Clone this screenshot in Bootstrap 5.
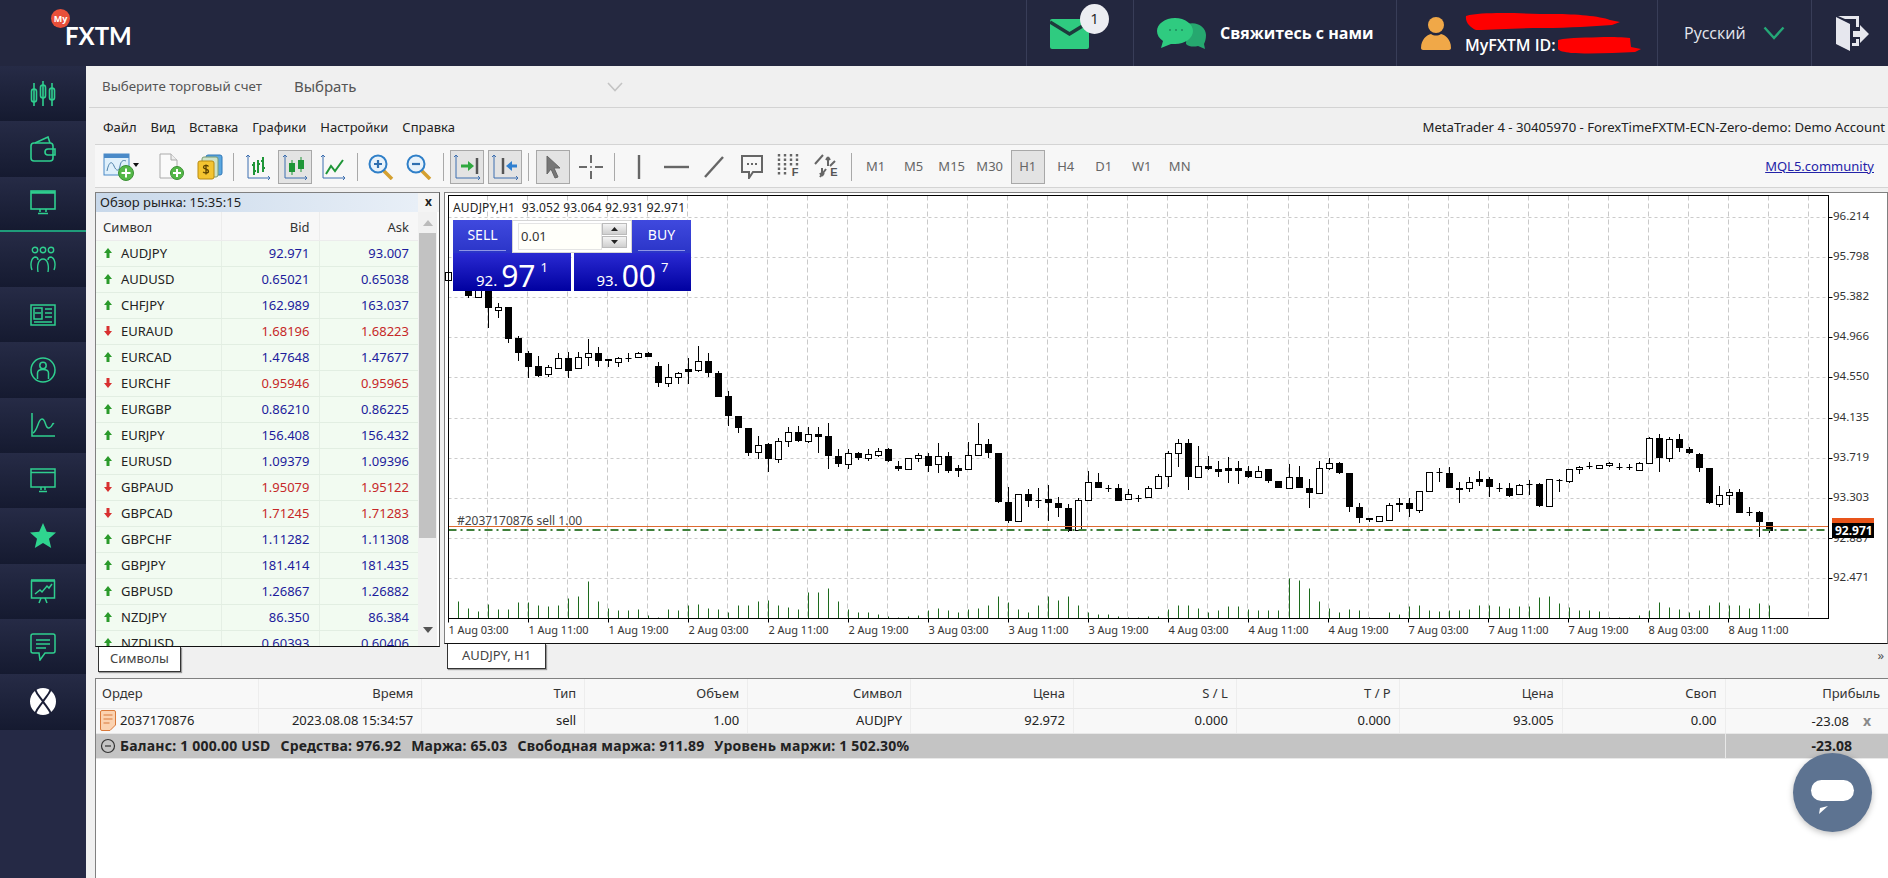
<!DOCTYPE html>
<html lang="ru">
<head>
<meta charset="utf-8">
<title>MyFXTM WebTrader</title>
<link href="https://cdn.jsdelivr.net/npm/bootstrap@5.3.0/dist/css/bootstrap.min.css" rel="stylesheet">
<style>
html,body{height:878px;overflow:hidden}
body{font-family:"Noto Sans","Liberation Sans",sans-serif;font-size:13px;background:#f0f0f0;color:#222}
.topbar{height:66px;background:#23273f;color:#fff;font-family:"Open Sans","Noto Sans",sans-serif;flex:none}
.logo-box{width:200px;padding:9px 0 0 51px}
.my-dot{width:19px;height:19px;border-radius:50%;background:#e8503a;color:#fff;font-size:9px;font-weight:700;line-height:19px;text-align:center;flex:none}
.fx-word{font-family:"Lato",sans-serif;font-size:24px;font-weight:700;line-height:24px;margin:15px 0 0 -5px;color:#fff}
.hcell{border-left:1px solid #383d58;height:66px}
.hc-mail{width:107px;padding-left:23px}
.hc-chat{width:263px;padding-left:23px;gap:13px;font-weight:700;font-size:16px}
.hc-prof{width:261px;padding-left:24px;gap:14px}
.hc-lang{width:154px;padding-left:26px;font-size:16px;color:#e6e8ef;gap:17px}
.hc-exit{width:77px;padding-left:24px}
.note-dot{position:absolute;left:53px;top:4px;width:29px;height:30px;border-radius:50%;background:#ecedf2;color:#222;font-size:15px;line-height:29px;text-align:center}
.prof-id{font-size:16px;font-weight:600;line-height:20px;margin-top:-1px}
.sidenav{width:86px;background:#252945;flex:none}
.side-item{height:55.3px;background:linear-gradient(#262b46,#151a30);flex:none}
.side-on{border-bottom:2px solid #1f9c7a}
.work{min-width:0;padding-left:9px;position:relative}
.acct-row{height:42px;margin-left:-6px;padding-left:13px;border-bottom:1px solid #d3d3d3;flex:none;color:#555;font-size:13.3px}
.acct-pick{font-size:15px;margin-left:32px;width:329px}
.menu-row{height:36px;padding:3px 3px 0 8px;flex:none;font-size:13px;color:#222;gap:14px}
.title-txt{font-size:13.15px}
.tools{height:44px;background:#f7f7f7;border:1px solid #d4d4d4;border-width:1px 0;flex:none;padding:1px 0 0 8px}
.tool{width:37.7px;height:42px;flex:none}
.tool-on{width:34px;height:34px;background:#e3e3e3;border:1px solid #a8a8a8}
.tool-sep{width:10.5px;flex:none}
.tool-sep i{display:block;width:1px;height:28px;background:#a9a9a9}
.tf{width:38px;font-size:13px;color:#666;text-align:center;flex:none}
.mql-link{color:#2323a8;margin-right:14px;font-size:13px}
.pane-row{height:486px;margin-top:4px;gap:4px;flex:none}
.mw-col{width:345px;flex:none}
.mw-frame{height:455px;border:1px solid #808080;border-bottom-color:#111;border-right-color:#555;background:#fff;flex:none}
.mw-title{height:19px;flex:none}
.mw-time{width:322px;padding-left:4px;background:linear-gradient(90deg,#c8d8ea,#e8eff7);line-height:19px}
.mw-x{width:21px;font-weight:700;font-size:12px;text-align:center;background:#f4f4f4;line-height:18px;color:#222}
.mw-body{min-height:0;overflow:hidden}
.mw-wrap{width:322px;overflow:hidden;flex:none}
.table.quote-tb{table-layout:fixed;width:322px;margin:0}
.table.quote-tb>*>tr>*{background:#f2fbf1;box-shadow:none;height:26px;padding:0 9px 0 8px;border:0;border-bottom:1px solid #e2eee2;border-left:1px solid #e5efe5;line-height:25px;white-space:nowrap;color:#222;font-weight:400}
.table.quote-tb>thead>tr>*{background:#f7f7f7;height:28px;border-color:#ececec;color:#333;padding-left:7px}
.table.quote-tb>*>tr>*:first-child{border-left:0}
.table.quote-tb>tbody>tr>.up{color:#1c1c9c}
.table.quote-tb>tbody>tr>.dn{color:#c62828}
.sym-in{gap:9px}
.scroll-col{width:19px;background:#f1f1f1;margin-left:0;flex:none}
.scroll-up{height:21px;color:#aaa}
.scroll-thumb{height:305px;background:#c2c2c2;margin:0 1px}
.scroll-dn{margin-top:auto;height:26px;padding-bottom:6px}
.ws-tab{height:25px;background:#fff;border:1px solid #333;border-top:0;box-shadow:1px 1px 1px #999;line-height:23px;text-align:center;color:#444}
.tab-sym{width:83px;margin-left:3px}
.tab-chart{width:99px;margin-left:3px}
.ch-frame{height:452px;border:1px solid #808080;border-bottom-color:#111;background:#fff;position:relative;flex:none}
.ch-col{min-width:0}
.ch-svg{display:block;font-family:"Noto Sans",sans-serif}
.tab-strip{height:33px;position:relative}
.more-mark{position:absolute;right:4px;top:2px;color:#555;font-size:13px}
.trade-box{position:absolute;left:8px;top:27px;width:238px;color:#fff}
.tr-side{height:33px;width:59px;background:linear-gradient(#3f49de,#2b35c8);text-align:center;font-size:14px;line-height:29px;padding:0 6px}
.tr-side span{display:block;height:31px;border-bottom:1px solid #8f95e6}
.tr-lot{width:120px;height:33px;background:#fff;border:1px solid #d5d5d5;color:#333;padding:2px 4px 2px 5px;background-clip:padding-box}
.lot-in{flex:1;border:1px solid #e4e4e4;line-height:24px;padding-left:2px;background:#fffffa}
.spin{width:25px;gap:1px}
.spin b{display:flex;align-items:center;justify-content:center;height:12px;background:linear-gradient(#f4f4f4,#cfcfcf);border:1px solid #bbb}
.tr-quotes{gap:3px}
.tr-q{width:118px;height:38px;background:linear-gradient(#2a2ad2,#0000a0);line-height:1}
.tr-q+.tr-q{width:117px}
.q-sm{font-size:15px;margin-bottom:3px}
.q-lg{font-size:30px;margin:0 5px 0 4px}
.q-sup{font-size:13px;margin-bottom:17px}
.orders{background:#fff;border:1px solid #808080;border-width:1px 0 0 1px;min-height:0}
.table.ord-tb{table-layout:fixed;width:100%;margin:0}
.table.ord-tb>*>tr>*{background:#f8f8f8;box-shadow:none;padding:0 8px 0 6px;text-align:right;height:25px;border:0;border-bottom:1px solid #e8e8e8;border-left:1px solid #ededed;white-space:nowrap;color:#222;font-weight:400;vertical-align:middle}
.table.ord-tb>thead>tr>*{height:29px;color:#333}
.table.ord-tb>*>tr>*:first-child{text-align:left;border-left:0}
.table.ord-tb>tbody>tr.sum-row>*{background:#c4c4c4;font-weight:700;height:25px;font-size:14px;letter-spacing:.2px;border-top:1px solid #eee}
.table.ord-tb>tbody>tr.sum-row>*.sum-val{border-left:1px solid #e8e8e8;padding-right:36px;letter-spacing:0}
.sum-gap{margin-right:6px}
.x-mark{display:inline-block;width:10px;margin:0 8px 0 13px;color:#8a8a8a;font-weight:700;text-align:center;font-size:14px}
.chat-fab{position:fixed;left:1793px;top:753px;width:79px;height:79px;border-radius:50%;background:#5d7391;box-shadow:0 2px 6px rgba(0,0,0,.25)}
.chat-fab svg{display:block}
</style>
</head>
<body class="d-flex flex-column">
<header class="topbar d-flex">
  <div class="logo-box d-flex align-items-start"><span class="my-dot">My</span><span class="fx-word">FXTM</span></div>
  <div class="ms-auto d-flex">
    <div class="hcell hc-mail d-flex align-items-center position-relative">
      <svg width="40" height="31" viewBox="0 0 40 31"><rect y="1" width="39" height="30" rx="2" fill="#2fcb80"/><path d="M0 4 19.5 16 39 4" fill="none" stroke="#1d3a3c" stroke-width="3.5"/></svg>
      <span class="note-dot">1</span>
    </div>
    <div class="hcell hc-chat d-flex align-items-center">
      <svg width="50" height="32" viewBox="0 0 50 32"><path d="M30 7c10-3 19 3 19 11 0 4-1 7-2 9l1 5-7-3c-4 1-9 1-12-2z" fill="#26a86f"/><path d="M18 1c10 0 18 6 18 13s-8 13-18 13l-4 0-10 4 2-7C2 21 0 18 0 14 0 7 8 1 18 1z" fill="#2fcb80"/><circle cx="13" cy="13" r="1" fill="#1e8c5e"/><circle cx="19" cy="13" r="1" fill="#1e8c5e"/><circle cx="25" cy="13" r="1" fill="#1e8c5e"/></svg>
      <span>Свяжитесь с нами</span>
    </div>
    <div class="hcell hc-prof d-flex align-items-center">
      <svg width="30" height="33" viewBox="0 0 30 33"><circle cx="15" cy="8" r="8" fill="#f0a848"/><path d="M0 31c0-9 6-13 10-14 3 2 7 2 10 0 4 1 10 5 10 14 0 1-1 2-2 2H2c-1 0-2-1-2-2z" fill="#f0a848"/></svg>
      <div class="d-flex flex-column">
        <svg class="d-block" width="156" height="20" viewBox="0 0 156 20"><path d="M1 5C20 0 60 3 90 3c20 0 45 2 55 6l10 2-8 3c-20 1-40 3-70 3-25 0-48 2-66 2C6 17 0 12 1 5z" fill="#f00"/></svg>
        <div class="prof-id d-flex align-items-center mt-1"><span>MyFXTM ID:</span><svg width="86" height="18" viewBox="0 0 86 18"><path d="M2 4c12-3 30-2 46-3 8 0 20 0 26 1l1 9 10 2-6 3c-20 1-45 2-64 1C8 16 3 15 2 13z" fill="#f00"/></svg></div>
      </div>
    </div>
    <div class="hcell hc-lang d-flex align-items-center">
      <span>Русский</span>
      <svg width="22" height="14" viewBox="0 0 22 14"><path d="M1.5 1.5 11 12 20.5 1.5" fill="none" stroke="#24a877" stroke-width="2.4"/></svg>
    </div>
    <div class="hcell hc-exit d-flex align-items-center">
      <svg width="33" height="35" viewBox="0 0 33 35"><path d="M0 1 14 8v27L0 28z" fill="#e6e7ee"/><path d="M2 0h21v11h-3V3H9z M16 27h4v-4h3v7h-7z" fill="#e6e7ee"/><path d="M17 15h7V9l9 9-9 9v-6h-7z" fill="#e6e7ee"/></svg>
    </div>
  </div>
</header>
<div class="d-flex flex-grow-1" style="min-height:0">
  <nav class="sidenav d-flex flex-column" id="sideNav">
    <div class="side-item d-flex align-items-center justify-content-center"><svg width="26" height="28" viewBox="0 0 26 28" fill="none" stroke="#2fcf8f" stroke-width="1.6"><path d="M4 3v23M13 1v25M22 3v23"/><rect x="1.5" y="9" width="5" height="13" rx="2.5"/><rect x="10.5" y="5" width="5" height="13" rx="2.5"/><rect x="19.5" y="8" width="5" height="12" rx="2.5"/></svg></div>
    <div class="side-item d-flex align-items-center justify-content-center"><svg width="26" height="26" viewBox="0 0 26 26" fill="none" stroke="#2fcf8f" stroke-width="1.6"><rect x="1" y="7" width="22" height="18" rx="3"/><path d="M5 7 18 1l2 6"/><path d="M25 13h-7a3 3 0 0 0 0 6h7z"/></svg></div>
    <div class="side-item side-on d-flex align-items-center justify-content-center"><svg width="26" height="26" viewBox="0 0 26 26" fill="none" stroke="#2fcf8f" stroke-width="1.6"><rect x="1" y="1" width="24" height="18"/><path d="M1 2.5h24" stroke-width="2.5"/><path d="M10 19v3M16 19v3M8 23.500h10"/></svg></div>
    <div class="side-item d-flex align-items-center justify-content-center"><svg width="26" height="27" viewBox="0 0 26 27" fill="none" stroke="#2fcf8f" stroke-width="1.4"><circle cx="5" cy="4" r="2.700"/><circle cx="13" cy="4" r="2.700"/><circle cx="21" cy="4" r="2.700"/><path d="M2 24c-2-5-1-12 3-13 2 0 3 1 3 3M24 24c2-5 1-12-3-13-2 0-3 1-3 3M8 26c-1-6 0-13 5-13s6 7 5 13"/></svg></div>
    <div class="side-item d-flex align-items-center justify-content-center"><svg width="26" height="22" viewBox="0 0 26 22" fill="none" stroke="#2fcf8f" stroke-width="1.5"><rect x="1" y="1" width="24" height="20"/><rect x="4" y="4" width="8" height="11"/><path d="M5 9h6M15 5h7M15 9h7M15 13h7M4 18h18"/></svg></div>
    <div class="side-item d-flex align-items-center justify-content-center"><svg width="26" height="26" viewBox="0 0 26 26" fill="none" stroke="#2fcf8f" stroke-width="1.5"><circle cx="13" cy="13" r="12"/><circle cx="13" cy="8.500" r="3.200"/><path d="M7.500 22v-6c0-2 2-3.500 5.500-3.500s5.500 1.500 5.500 3.500v6"/></svg></div>
    <div class="side-item d-flex align-items-center justify-content-center"><svg width="26" height="26" viewBox="0 0 26 26" fill="none" stroke="#2fcf8f" stroke-width="1.5"><path d="M2 1v23h23"/><path d="M3 21c5-3 5-14 9-14s3 10 7 9 3-6 5-4"/></svg></div>
    <div class="side-item d-flex align-items-center justify-content-center"><svg width="26" height="26" viewBox="0 0 26 26" fill="none" stroke="#2fcf8f" stroke-width="1.5"><rect x="1" y="1" width="24" height="18"/><path d="M1 4.500h24M11 19v3M15 19v3M9 23.500h8"/></svg></div>
    <div class="side-item d-flex align-items-center justify-content-center"><svg width="26" height="26" viewBox="0 0 26 26"><path d="M13 0l3.800 8.800 9.200.8-7 6.200 2.200 9.200L13 20l-8.200 5 2.200-9.200-7-6.200 9.200-.8z" fill="#2fd48f"/></svg></div>
    <div class="side-item d-flex align-items-center justify-content-center"><svg width="26" height="26" viewBox="0 0 26 26" fill="none" stroke="#2fcf8f" stroke-width="1.5"><rect x="1.500" y="3" width="23" height="17"/><path d="M1 2h24M5 16l5-4 2 2 5-6 2 2 3-4M11 20l-2 5M15 20l2 5"/></svg></div>
    <div class="side-item d-flex align-items-center justify-content-center"><svg width="26" height="28" viewBox="0 0 26 28" fill="none" stroke="#2fcf8f" stroke-width="1.5"><path d="M3 1h20a2 2 0 0 1 2 2v15a2 2 0 0 1-2 2H15l-5 7-1-7H3a2 2 0 0 1-2-2V3a2 2 0 0 1 2-2z"/><path d="M6 7h14M6 11h14M6 15h10"/></svg></div>
    <div class="side-item d-flex align-items-center justify-content-center"><svg width="26" height="27" viewBox="0 0 26 27"><ellipse cx="13" cy="13.500" rx="13" ry="13.500" fill="#fff"/><path d="M5 1c2 6 6 9 8 12.500 2-3.500 6-7 8-12.500M5 26c2-6 6-9 8-12.500 2 3.500 6 7 8 12.500" fill="none" stroke="#1a1e36" stroke-width="2"/></svg></div>
  </nav>
  <main class="work flex-grow-1 d-flex flex-column">
    <div class="acct-row d-flex align-items-center">
      <span>Выберите торговый счет</span>
      <span class="acct-pick d-flex align-items-center justify-content-between"><span>Выбрать</span><svg width="16" height="10" viewBox="0 0 16 10"><path d="M1 1l7 7.500L15 1" fill="none" stroke="#c4c4c4" stroke-width="1.600"/></svg></span>
    </div>
    <div class="menu-row d-flex align-items-center">
      <span>Файл</span><span>Вид</span><span>Вставка</span><span>Графики</span><span>Настройки</span><span>Справка</span>
      <span class="ms-auto title-txt">MetaTrader 4 - 30405970 - ForexTimeFXTM-ECN-Zero-demo: Demo Account</span>
    </div>
    <div class="tools d-flex align-items-center">
      <span class="d-flex align-items-center" style="width:50px;flex:none"><svg width="36" height="28" viewBox="0 0 36 28"><rect x="1" y="1" width="25" height="21" fill="#dff0fb" stroke="#4a8ac8"/><rect x="1" y="1" width="25" height="4" fill="#4a8ac8"/><path d="M4 18c2-10 5-10 7-5s5 6 6 0 4-6 6-5" fill="none" stroke="#4d7fa8"/><circle cx="23" cy="20" r="7.500" fill="#54b848" stroke="#3b8f34"/><path d="M23 15.500v9M18.500 20h9" stroke="#fff" stroke-width="2"/><path d="M30 10h6l-3 4z" fill="#111"/></svg></span>
      <span class="tool d-flex align-items-center justify-content-center"><svg width="25" height="27" viewBox="0 0 25 27"><path d="M1 1h11l6 6v18H1z" fill="#fafafa" stroke="#aaa"/><path d="M12 1v6h6" fill="#eee" stroke="#aaa"/><circle cx="18" cy="20" r="6.500" fill="#54b848" stroke="#3b8f34"/><path d="M18 16v8M14 20h8" stroke="#fff" stroke-width="2"/></svg></span>
      <span class="tool d-flex align-items-center justify-content-center"><svg width="26" height="26" viewBox="0 0 26 26"><rect x="9" y="1" width="16" height="20" rx="2" fill="#5aa7e0" stroke="#2f78b8"/><rect x="5" y="3" width="16" height="20" rx="2" fill="#cfe3c8" stroke="#7a9a70"/><rect x="1" y="7" width="16" height="18" rx="2" fill="#f4c430" stroke="#b88a10"/><path d="M11.500 12.500c-1-1.500-5-1.500-5 .7 0 2.600 5 1.400 5 4 0 2.300-4.300 2.200-5.300.6M9 10.500v10" fill="none" stroke="#5a4000" stroke-width="1.300"/></svg></span>
      <span class="tool-sep d-flex justify-content-center"><i></i></span>
      <span class="tool d-flex align-items-center justify-content-center"><svg width="26" height="26" viewBox="0 0 26 26" fill="none"><path d="M3 1v23h22" stroke="#3d6fb0"/><path d="M1 3l2-2 2 2M23 22l2 2-2 2" stroke="#3d6fb0"/><path d="M9 8v13M7 11h2M9 17h2M18 3v15M16 7h2M18 14h2" stroke="#1f9638" stroke-width="2"/><path d="M13 6v13M15 10h-2" stroke="#1f9638" stroke-width="2"/></svg></span>
      <span class="tool d-flex align-items-center justify-content-center"><span class="tool-on d-flex align-items-center justify-content-center"><svg width="26" height="26" viewBox="0 0 26 26" fill="none"><path d="M3 1v23h22" stroke="#3d6fb0"/><path d="M1 3l2-2 2 2M23 22l2 2-2 2" stroke="#3d6fb0"/><path d="M10 6v15M19 3v15" stroke="#1f9638"/><rect x="7" y="9" width="6" height="9" fill="#1f9638"/><rect x="16" y="6" width="6" height="9" fill="#1f9638"/></svg></span></span>
      <span class="tool d-flex align-items-center justify-content-center"><svg width="26" height="26" viewBox="0 0 26 26" fill="none"><path d="M3 1v23h22" stroke="#3d6fb0"/><path d="M1 3l2-2 2 2M23 22l2 2-2 2" stroke="#3d6fb0"/><path d="M6 20l5-8 4 5 8-11" stroke="#1f9638" stroke-width="2"/></svg></span>
      <span class="tool-sep d-flex justify-content-center"><i></i></span>
      <span class="tool d-flex align-items-center justify-content-center"><svg width="26" height="26" viewBox="0 0 26 26" fill="none"><path d="M15 16l9 9" stroke="#d4a030" stroke-width="3.500"/><circle cx="10" cy="10" r="8.500" fill="#e8f2fa" stroke="#2f7fc8" stroke-width="2"/><path d="M10 6v8M6 10h8" stroke="#2f6fb0" stroke-width="2.200"/></svg></span>
      <span class="tool d-flex align-items-center justify-content-center"><svg width="26" height="26" viewBox="0 0 26 26" fill="none"><path d="M15 16l9 9" stroke="#d4a030" stroke-width="3.500"/><circle cx="10" cy="10" r="8.500" fill="#e8f2fa" stroke="#2f7fc8" stroke-width="2"/><path d="M6 10h8" stroke="#2f6fb0" stroke-width="2.200"/></svg></span>
      <span class="tool-sep d-flex justify-content-center"><i></i></span>
      <span class="tool d-flex align-items-center justify-content-center"><span class="tool-on d-flex align-items-center justify-content-center"><svg width="28" height="26" viewBox="0 0 28 26" fill="none"><path d="M3 1v23h24" stroke="#3d6fb0"/><path d="M1 3l2-2 2 2M25 22l2 2-2 2" stroke="#3d6fb0"/><path d="M8 12h10" stroke="#2fa83f" stroke-width="3"/><path d="M15 7l6 5-6 5z" fill="#2fa83f"/><path d="M24 4v16" stroke="#555" stroke-width="2.500"/></svg></span></span>
      <span class="tool d-flex align-items-center justify-content-center"><span class="tool-on d-flex align-items-center justify-content-center"><svg width="28" height="26" viewBox="0 0 28 26" fill="none"><path d="M3 1v23h24" stroke="#3d6fb0"/><path d="M1 3l2-2 2 2M25 22l2 2-2 2" stroke="#3d6fb0"/><path d="M12 4v16" stroke="#555" stroke-width="2.500"/><path d="M18 12h8" stroke="#2f7fd0" stroke-width="3"/><path d="M21 7l-6 5 6 5z" fill="#2f7fd0"/></svg></span></span>
      <span class="tool-sep d-flex justify-content-center"><i></i></span>
      <span class="tool d-flex align-items-center justify-content-center"><span class="tool-on d-flex align-items-center justify-content-center"><svg width="16" height="24" viewBox="0 0 16 24"><path d="M2 1l13 12h-6l4 9-3 1-4-9-4 5z" fill="#777" stroke="#666"/></svg></span></span>
      <span class="tool d-flex align-items-center justify-content-center"><svg width="26" height="26" viewBox="0 0 26 26" fill="none" stroke="#6a6a6a" stroke-width="2"><path d="M13 1v8M13 17v8M1 13h8M17 13h8"/><circle cx="13" cy="13" r="1" fill="#6a6a6a" stroke="none"/></svg></span>
      <span class="tool-sep d-flex justify-content-center"><i></i></span>
      <span class="tool d-flex align-items-center justify-content-center"><svg width="4" height="26" viewBox="0 0 4 26"><path d="M2 1v24" stroke="#666" stroke-width="2.400"/></svg></span>
      <span class="tool d-flex align-items-center justify-content-center"><svg width="25" height="4" viewBox="0 0 25 4"><path d="M0 2h25" stroke="#666" stroke-width="2.400"/></svg></span>
      <span class="tool d-flex align-items-center justify-content-center"><svg width="20" height="22" viewBox="0 0 20 22"><path d="M1 21 19 1" stroke="#666" stroke-width="2.400"/></svg></span>
      <span class="tool d-flex align-items-center justify-content-center"><svg width="22" height="24" viewBox="0 0 22 24" fill="none"><path d="M1 1h20v16H12l-4 6v-6H1z" stroke="#666" stroke-width="2"/><path d="M6 9h2M10 9h2M14 9h2" stroke="#666" stroke-width="2"/></svg></span>
      <span class="tool d-flex align-items-center justify-content-center"><svg width="26" height="28" viewBox="0 0 26 28"><path d="M2 1v22M8 1v22M14 1v12M20 1v12" stroke="#666" stroke-width="2.400" stroke-dasharray="2.500 2"/><text x="18" y="23" font-size="11" font-weight="700" fill="#555" text-anchor="middle" font-family="Liberation Sans">F</text></svg></span>
      <span class="tool d-flex align-items-center justify-content-center"><svg width="26" height="28" viewBox="0 0 26 28" fill="none" stroke="#666" stroke-width="2"><path d="M1 11 9 2M6 24l6-8M14 4v9M14 4l-2 3M14 4l2 3M8 15v8M8 23l-2-3M8 23l2-3M16 13l5-5"/><text x="20" y="23" font-size="11" font-weight="700" fill="#555" stroke="none" text-anchor="middle" font-family="Liberation Sans">E</text></svg></span>
      <span class="tool-sep d-flex justify-content-center"><i></i></span>
      <span class="tf">M1</span><span class="tf">M5</span><span class="tf">M15</span><span class="tf">M30</span>
      <span class="tf d-flex justify-content-center"><span class="tool-on d-flex align-items-center justify-content-center">H1</span></span>
      <span class="tf">H4</span><span class="tf">D1</span><span class="tf">W1</span><span class="tf">MN</span>
      <a class="mql-link ms-auto" href="#">MQL5.community</a>
    </div>
    <div class="pane-row d-flex">
      <div class="mw-col d-flex flex-column">
        <div class="mw-frame d-flex flex-column">
          <div class="mw-title d-flex"><span class="mw-time">Обзор рынка: 15:35:15</span><span class="mw-x">x</span></div>
          <div class="mw-body d-flex flex-grow-1">
            <div class="mw-wrap">
              <table class="table quote-tb">
                <colgroup><col style="width:125px"><col style="width:98px"><col style="width:99px"></colgroup>
                <thead><tr><th>Символ</th><th class="text-end">Bid</th><th class="text-end">Ask</th></tr></thead>
                <tbody id="quoteBody"></tbody>
              </table>
            </div>
            <div class="scroll-col d-flex flex-column">
              <div class="scroll-up d-flex align-items-center justify-content-center"><svg width="10" height="6" viewBox="0 0 10 6"><path d="M5 0l5 6H0z" fill="#bbb"/></svg></div>
              <div class="scroll-thumb"></div>
              <div class="scroll-dn d-flex align-items-center justify-content-center"><svg width="10" height="6" viewBox="0 0 10 6"><path d="M5 6l5-6H0z" fill="#555"/></svg></div>
            </div>
          </div>
        </div>
        <div class="ws-tab tab-sym">Символы</div>
      </div>
      <div class="ch-col flex-grow-1 d-flex flex-column">
        <div class="ch-frame">
          <svg class="ch-svg" id="chartSvg" width="1444" height="450" viewBox="444 193 1444 450"></svg>
          <div class="trade-box">
            <div class="d-flex">
              <div class="tr-side"><span>SELL</span></div>
              <div class="tr-lot d-flex"><span class="lot-in">0.01</span><span class="spin d-flex flex-column"><b><svg width="7" height="4" viewBox="0 0 7 4"><path d="M3.500 0 7 4H0z" fill="#222"/></svg></b><b><svg width="7" height="4" viewBox="0 0 7 4"><path d="M3.500 4 7 0H0z" fill="#222"/></svg></b></span></div>
              <div class="tr-side"><span>BUY</span></div>
            </div>
            <div class="d-flex tr-quotes">
              <div class="tr-q d-flex align-items-end justify-content-center"><span class="q-sm">92.</span><span class="q-lg">97</span><span class="q-sup">1</span></div>
              <div class="tr-q d-flex align-items-end justify-content-center"><span class="q-sm">93.</span><span class="q-lg">00</span><span class="q-sup">7</span></div>
            </div>
          </div>
        </div>
        <div class="tab-strip"><div class="ws-tab tab-chart">AUDJPY, H1</div><span class="more-mark">»</span></div>
      </div>
    </div>
    <div class="orders flex-grow-1">
      <table class="table ord-tb">
        <thead><tr><th>Ордер</th><th>Время</th><th>Тип</th><th>Объем</th><th>Символ</th><th>Цена</th><th>S / L</th><th>T / P</th><th>Цена</th><th>Своп</th><th>Прибыль</th></tr></thead>
        <tbody>
          <tr>
            <td class="ps-1"><span class="d-flex align-items-center gap-1"><svg width="16" height="21" viewBox="0 0 16 21"><path d="M2 .5h12a1.500 1.500 0 0 1 1.500 1.500v13L10 20.500H2A1.500 1.500 0 0 1 .5 19V2A1.500 1.500 0 0 1 2 .5z" fill="#fbd2b0" stroke="#d9793a"/><path d="M3.500 5h9M3.500 9h9M3.500 13h6" stroke="#d9793a"/></svg>2037170876</span></td>
            <td>2023.08.08 15:34:57</td><td>sell</td><td>1.00</td><td>AUDJPY</td><td>92.972</td><td>0.000</td><td>0.000</td><td>93.005</td><td>0.00</td>
            <td>-23.08<span class="x-mark">x</span></td>
          </tr>
          <tr class="sum-row">
            <td colspan="10" class="ps-1"><span class="d-flex align-items-center gap-1"><svg width="16" height="16" viewBox="0 0 16 16" fill="none" stroke="#333" stroke-width="1.200"><circle cx="8" cy="8" r="6.500"/><path d="M5 8h6"/></svg><span class="sum-gap">Баланс: 1 000.00 USD</span><span class="sum-gap">Средства: 976.92</span><span class="sum-gap">Маржа: 65.03</span><span class="sum-gap">Свободная маржа: 911.89</span><span>Уровень маржи: 1 502.30%</span></span></td>
            <td class="sum-val">-23.08</td>
          </tr>
        </tbody>
      </table>
    </div>
  </main>
</div>
<div class="chat-fab"><svg width="79" height="79" viewBox="0 0 79 79"><rect x="18" y="27" width="43" height="21" rx="10.500" fill="#fff"/><path d="M35 53l-8 2-1 6z" fill="#fff"/></svg></div>
<script src="https://cdn.jsdelivr.net/npm/bootstrap@5.3.0/dist/js/bootstrap.bundle.min.js"></script>
<script>
var q=[["AUDJPY","92.971","93.007",1],["AUDUSD","0.65021","0.65038",1],["CHFJPY","162.989","163.037",1],["EURAUD","1.68196","1.68223",0],["EURCAD","1.47648","1.47677",1],["EURCHF","0.95946","0.95965",0],["EURGBP","0.86210","0.86225",1],["EURJPY","156.408","156.432",1],["EURUSD","1.09379","1.09396",1],["GBPAUD","1.95079","1.95122",0],["GBPCAD","1.71245","1.71283",0],["GBPCHF","1.11282","1.11308",1],["GBPJPY","181.414","181.435",1],["GBPUSD","1.26867","1.26882",1],["NZDJPY","86.350","86.384",1],["NZDUSD","0.60393","0.60406",1]];
document.getElementById('quoteBody').innerHTML=q.map(function(r){
 var c=r[3]?'up':'dn';
 var a=r[3]?'<path d="M4 0 8 5H5.500v5h-3V5H0z" fill="#2a9a2a"/>':'<path d="M4 10 8 5H5.500V0h-3v5H0z" fill="#d83030"/>';
 return '<tr><td><span class="d-flex align-items-center sym-in"><svg width="8" height="10" viewBox="0 0 8 10">'+a+'</svg>'+r[0]+'</span></td><td class="text-end '+c+'">'+r[1]+'</td><td class="text-end '+c+'">'+r[2]+'</td></tr>';
}).join('');
// candle table: type,wickTop,bodyTop,bodyBottom,wickBottom (y in screen px)
var d="W270 272 280 281,B275 277 288 289,B285 287 296 298,W285 288 297 297,B285 288 308 328,W303 307 310 318,B307 307 339 343,B336 338 353 361,B351 353 367 378,B356 366 376 377,W365 367 374 377,W353 358 368 368,B352 358 371 378,W352 357 368 368,W339 353 357 366,B347 353 361 367,B359 359 361 367,W357 358 362 367,D353 358 358 362,W352 353 357 357,B352 353 357 357,B362 366 383 387,W364 377 383 387,W372 373 377 384,B358 369 372 384,W346 361 370 372,B353 361 373 377,B371 373 397 397,B391 396 416 426,B416 416 428 433,B428 428 453 456,W436 445 452 459,B443 444 459 472,W438 441 459 463,W427 432 441 447,B426 432 441 442,W427 434 441 443,B427 434 437 453,B423 436 456 469,B449 456 464 467,W449 453 464 469,B452 453 458 460,W449 454 458 461,W448 451 455 457,B448 449 461 462,B461 466 469 471,W458 458 469 469,W453 455 458 462,B453 456 466 472,W443 456 464 473,B452 456 471 473,B465 468 471 477,W442 455 469 469,W423 444 455 456,B439 444 453 458,B453 453 502 503,B487 502 521 523,W494 494 521 521,B489 494 501 507,D488 500 500 508,B485 499 503 521,B497 503 508 517,B504 508 531 532,W498 500 530 530,W471 482 500 500,B473 482 488 488,D485 488 488 492,B484 488 501 501,W489 494 499 499,D495 498 498 502,W486 488 497 497,W474 476 488 488,W451 453 476 487,W439 443 453 467,B439 443 477 490,W446 466 477 477,B456 466 469 470,B461 469 472 477,B457 468 471 483,B461 468 471 484,B466 471 477 478,W466 471 477 477,B469 469 481 483,B481 481 488 488,W464 477 488 488,B466 477 488 488,B479 488 493 508,W461 468 493 493,W458 463 468 470,B462 463 473 474,B473 473 507 512,B503 507 518 523,B518 518 520 522,W516 516 521 521,W503 505 520 520,B498 503 505 512,B498 503 509 517,W491 491 510 513,W472 472 491 491,D468 472 472 482,B467 473 488 488,B482 488 490 503,W477 482 488 492,B471 479 482 486,B477 479 487 497,D483 488 488 492,B483 488 496 497,W484 485 494 495,D480 484 484 495,B483 484 506 507,W479 479 506 506,D479 480 480 492,W469 469 481 483,W466 467 469 474,D462 466 466 469,W465 465 468 468,W462 463 465 467,D463 467 467 470,D464 467 467 470,W462 463 470 470,W437 438 463 463,B434 438 458 472,W437 439 458 462,B434 439 448 452,B447 449 453 454,B453 454 468 472,B468 468 503 504,W486 495 504 507,W489 492 495 505,B489 492 513 513,D507 512 512 516,B511 512 522 537,B522 522 531 533".split(',');
var v=[0,17,10,7,14,9,9,16,16,13,12,13,20,22,37,17,10,8,8,9,3,1,9,8,13,14,10,9,6,13,13,17,18,13,11,9,26,26,30,17,9,6,6,4,2,1,2,3,8,10,8,6,9,10,13,22,16,9,6,13,22,18,22,13,6,4,4,2,1,1,2,2,9,13,13,10,6,8,12,12,9,8,8,8,40,38,30,17,10,6,9,8,1,0,6,4,12,13,8,7,8,8,9,13,13,12,10,12,12,21,22,15,11,8,8,7,1,1,1,3,8,16,11,9,6,8,13,16,13,13,10,15,13];
var st=10.006,x0=447,L=447.5,R=1827.5,T=195.5,B=618.5,h=[];
function ln(a,b,c,e,s,ex){return '<line x1="'+a+'" y1="'+b+'" x2="'+c+'" y2="'+e+'" stroke="'+s+'" '+(ex||'')+'/>'}
var k,i;
var gy=[217.5,257.5,297.5,337.5,377.5,418.5,458.5,498.5,538.5,578.5],gl=['96.214','95.798','95.382','94.966','94.550','94.135','93.719','93.303','92.887','92.471'];
for(k=1;k<35;k++){var gx=Math.round(x0+st*4*k)-.5;if(gx<R)h.push(ln(gx,T,gx,B,'#c9c9c9','stroke-dasharray="5 3"'))}
gy.forEach(function(y){h.push(ln(L,y,R,y,'#cbcbcb','stroke-dasharray="3 3"'))});
v.forEach(function(a,i){if(a){var x=Math.round(x0+st*i)+.5;h.push(ln(x,B-a,x,B,'#1c6a1c'))}});
d.forEach(function(s,i){
 var t=s[0],p=s.slice(1).split(' ').map(Number),x=Math.round(x0+st*i)+.5;
 h.push(ln(x,p[0],x,p[3],'#000'));
 if(t=='D')h.push(ln(x-3,p[1]+.5,x+3,p[1]+.5,'#000'));
 else if(t=='W')h.push('<rect x="'+(x-3)+'" y="'+(p[1]+.5)+'" width="6" height="'+Math.max(p[2]-p[1],1)+'" fill="#fff" stroke="#000"/>');
 else h.push('<rect x="'+(x-3.5)+'" y="'+p[1]+'" width="7" height="'+Math.max(p[2]-p[1],2)+'" fill="#000"/>');
});
h.push(ln(L,526.5,R,526.5,'#dd6a30'));
h.push(ln(L,530,R,530,'#3f7f3a','stroke-width="2" stroke-dasharray="8 4 2 4"'));
h.push('<rect x="'+L+'" y="'+T+'" width="'+(R-L)+'" height="'+(B-T)+'" fill="none" stroke="#000"/>');
function tx(x,y,s,size,fill,ex){return '<text x="'+x+'" y="'+y+'" font-size="'+size+'" fill="'+fill+'" '+(ex||'')+'>'+s+'</text>'}
gy.forEach(function(y,n){h.push(ln(R,y,R+4,y,'#000'));if(n!=8)h.push(tx(1832,y+2,gl[n],11.5,'#333'))});
var labs=['1 Aug 03:00','1 Aug 11:00','1 Aug 19:00','2 Aug 03:00','2 Aug 11:00','2 Aug 19:00','3 Aug 03:00','3 Aug 11:00','3 Aug 19:00','4 Aug 03:00','4 Aug 11:00','4 Aug 19:00','7 Aug 03:00','7 Aug 11:00','7 Aug 19:00','8 Aug 03:00','8 Aug 11:00'];
labs.forEach(function(s,n){var x=Math.round(x0+80.03*n)+.5;h.push(ln(x,B,x,B+4,'#000'));h.push(tx(x,634,s,11,'#333','textLength="60"'))});
h.push(tx(452,212,'AUDJPY,H1&#160;&#160;93.052 93.064 92.931 92.971',12,'#222','textLength="232"'));
h.push(tx(456,525,'#2037170876 sell 1.00',12,'#444'));
h.push(tx(1832,541.5,gl[8],11.5,'#333'));
h.push('<rect x="1831" y="518" width="42" height="5" fill="#e8541a"/><rect x="1831" y="523" width="42" height="15" fill="#000"/>');
h.push(tx(1834,534.5,'92.971',12,'#fff','font-weight="700"'));
document.getElementById('chartSvg').innerHTML=h.join('');
</script>
</body>
</html>
